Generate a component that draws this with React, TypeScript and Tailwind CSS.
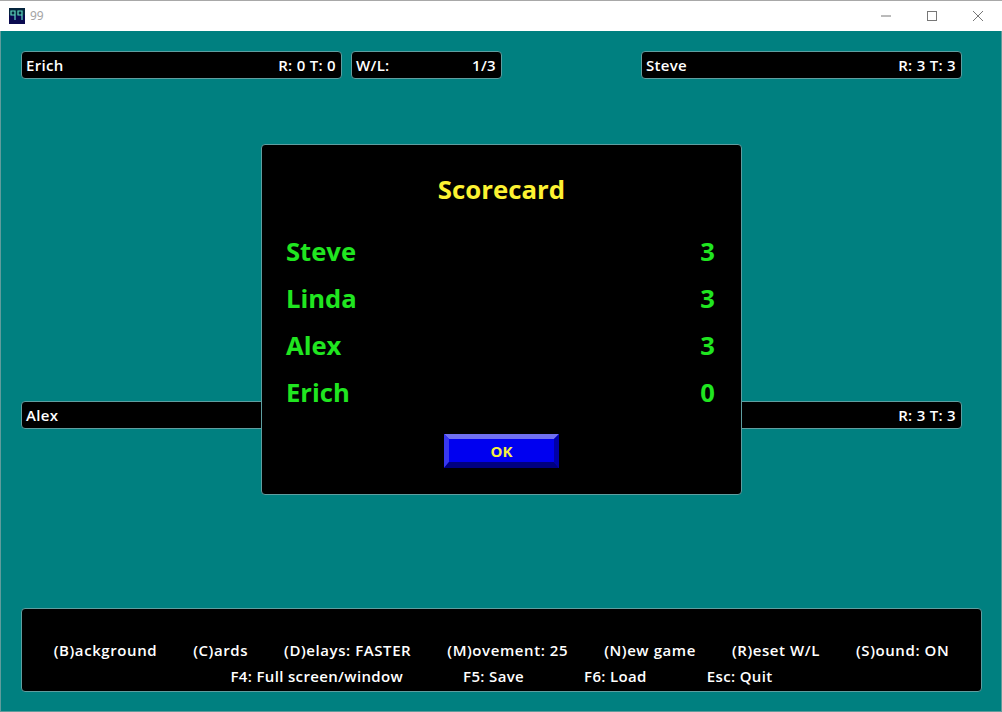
const F = "font-['Open_Sans','Noto_Sans',sans-serif]";

function Bar({ left, right, className }: { left: string; right?: string; className: string }) {
  return (
    <div className={`h-[28px] flex items-center justify-between pl-[4px] pr-[5px] bg-black rounded-[4px] border border-[#5f9ea0] text-white text-[15px] font-semibold tracking-[0.3px] ${className}`}>
      <span>{left}</span>
      {right && <span>{right}</span>}
    </div>
  );
}

function Score({ name, value }: { name: string; value: string }) {
  return (
    <div className="h-[47px] flex items-center justify-between text-[#20e620] text-[25.6px] font-bold pr-[1px]">
      <span>{name}</span>
      <span>{value}</span>
    </div>
  );
}

export default function App() {
  return (
    <div className={`w-[1002px] h-[712px] flex flex-col overflow-hidden relative ${F}`}>
      <div className="h-[31px] shrink-0 bg-white border-t border-[#a8a8a8] flex items-center pl-[9px]">
        <svg width="16" height="16" viewBox="0 0 16 16" className="shrink-0">
          <rect width="16" height="16" fill="#0a0a50" />
          <rect width="16" height="7" fill="#04243c" />
          <path d="M2 3h4v4H2zM6 7v5M9 3h4v4H9zM13 7v5" fill="none" stroke="#5fd8c0" strokeWidth="1.2" />
        </svg>
        <span className="ml-[5px] text-[12px] text-[#a4a4a4] font-['Noto_Sans',sans-serif]">99</span>
        <div className="ml-auto flex items-center">
          <svg width="46" height="30" viewBox="0 0 46 30"><path d="M18 15h10" stroke="#777" strokeWidth="1" /></svg>
          <svg width="46" height="30" viewBox="0 0 46 30"><rect x="18.5" y="10.5" width="9" height="9" fill="none" stroke="#777" /></svg>
          <svg width="46" height="30" viewBox="0 0 46 30" className="mr-[1px]"><path d="M18 10l10 10M28 10L18 20" stroke="#777" strokeWidth="1" /></svg>
        </div>
      </div>

      <div className="flex-1 flex flex-col bg-[#008080] pl-[20px] pr-[19px] pt-[20px] pb-[19px] border-x border-b border-[#5f9c9c]">
        <div className="flex">
          <Bar left="Erich" right="R: 0 T: 0" className="w-[321px]" />
          <Bar left="W/L:" right="1/3" className="w-[151px] ml-[9px]" />
          <Bar left="Steve" right="R: 3 T: 3" className="w-[321px] ml-[139px]" />
        </div>
        <div className="flex mt-[322px] justify-between w-[941px]">
          <Bar left="Alex" className="w-[321px]" />
          <Bar left="" right="R: 3 T: 3" className="w-[321px]" />
        </div>
        <div className="mt-auto h-[84px] bg-black rounded-[4px] border border-[#5f9ea0] text-white text-[15px] font-semibold flex flex-col items-center pt-[31px]">
          <div className="flex gap-[36px] leading-[21px] tracking-[0.58px]">
            <span>(B)ackground</span>
            <span>(C)ards</span>
            <span>(D)elays: FASTER</span>
            <span>(M)ovement: 25</span>
            <span>(N)ew game</span>
            <span>(R)eset W/L</span>
            <span>(S)ound: ON</span>
          </div>
          <div className="flex gap-[60px] leading-[21px] mt-[5px] tracking-[0.35px]">
            <span>F4: Full screen/window</span>
            <span>F5: Save</span>
            <span>F6: Load</span>
            <span>Esc: Quit</span>
          </div>
        </div>
      </div>

      <div className="absolute left-[261px] top-[144px] w-[481px] h-[351px] bg-black rounded-[4px] border border-[#5f9ea0] flex flex-col px-[24px]">
        <div className="text-center text-[#fcf232] text-[25.8px] font-bold leading-[32px] mt-[28px]">Scorecard</div>
        <div className="mt-[24px] pr-[1px]">
          <Score name="Steve" value="3" />
          <Score name="Linda" value="3" />
          <Score name="Alex" value="3" />
          <Score name="Erich" value="0" />
        </div>
        <button className="self-center mt-[17px] pt-[1px] w-[115px] h-[34px] relative bg-[#0000f0] text-[#f8f040] text-[15px] font-bold flex items-center justify-center">
          <svg className="absolute inset-0" width="115" height="34" viewBox="0 0 115 34">
            <polygon points="0,0 115,0 110,5 5,5" fill="#7070f0" />
            <polygon points="0,0 5,5 5,28 0,34" fill="#3838f0" />
            <polygon points="115,0 115,34 110,28 110,5" fill="#0000a8" />
            <polygon points="0,34 5,28 110,28 115,34" fill="#000080" />
          </svg>
          <span className="relative">OK</span>
        </button>
      </div>
    </div>
  );
}
